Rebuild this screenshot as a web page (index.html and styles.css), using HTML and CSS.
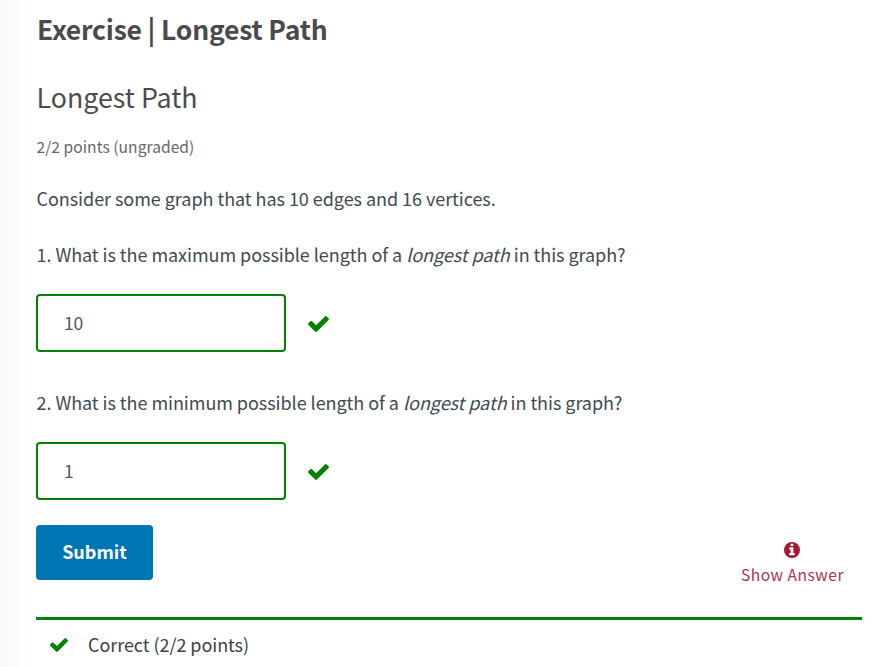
FILE: index.html
```html
<!DOCTYPE html>
<html lang="en">
<head>
<meta charset="utf-8">
<title>Exercise | Longest Path</title>
<link rel="stylesheet" href="styles.css">
</head>
<body>
<svg class="defs" width="0" height="0" aria-hidden="true">
  <symbol id="check" viewBox="121 334 1550 1188"><path d="M1671 566q0 40-28 68l-724 724-136 136q-28 28-68 28t-68-28l-136-136-362-362q-28-28-28-68t28-68l136-136q28-28 68-28t68 28l294 295 656-657q28-28 68-28t68 28l136 136q28 28 28 68z"/></symbol>
</svg>
<main class="unit">
  <h1 class="unit-title"><span>Exercise | Longest Path</span></h1>
  <h2 class="problem-title"><span>Longest Path</span></h2>
  <div class="progress"><span>2/2 points (ungraded)</span></div>
  <p class="text intro"><span>Consider some graph that has 10 edges and 16 vertices.</span></p>
  <p class="text"><span>1. What is the maximum possible length of a <em>longest path</em> in this graph?</span></p>
  <div class="answer">
    <input class="field" type="text" value="10" aria-label="Answer 1">
    <svg class="check"><use href="#check"/></svg>
  </div>
  <p class="text second"><span>2. What is the minimum possible length of a <em>longest path</em> in this graph?</span></p>
  <div class="answer">
    <input class="field" type="text" value="1" aria-label="Answer 2">
    <svg class="check"><use href="#check"/></svg>
  </div>
  <div class="actions">
    <button class="submit" type="button">Submit</button>
    <button class="show" type="button">
      <svg class="info" viewBox="0 0 1536 1536"><path fill-rule="evenodd" d="M768 0a768 768 0 1 1 0 1536a768 768 0 1 1 0-1536zM1024 1248v-160q0-14-9-23t-23-9h-96V544q0-14-9-23t-23-9H544q-14 0-23 9t-9 23v160q0 14 9 23t23 9h96v320h-96q-14 0-23 9t-9 23v160q0 14 9 23t23 9h448q14 0 23-9t9-23zM896 352V192q0-14-9-23t-23-9H672q-14 0-23 9t-9 23v160q0 14 9 23t23 9h192q14 0 23-9t9-23z"/></svg>
      <span>Show Answer</span>
    </button>
  </div>
  <div class="notification">
    <svg class="check small"><use href="#check"/></svg>
    <span>Correct (2/2 points)</span>
  </div>
</main>
</body>
</html>
```

FILE: styles.css
```css
* { box-sizing: border-box; }
body {
  margin: 0;
  height: 667px;
  overflow: hidden;
  background: linear-gradient(to right, #f8f8f8 0, #fcfcfc 14px, #fefefe 30px, #fff 36px);
  font-family: "Noto Sans CJK SC", "Open Sans", sans-serif;
  color: #414141;
}
.defs { display: block; }
.unit { padding: 11px 18px 0 36px; }
h1, h2, p { margin: 0; }
.unit-title { padding-left: 1px; font-size: 26.5px; line-height: 36px; font-weight: 600; letter-spacing: -.2px; color: #4a4a4a; }
.problem-title { margin-top: 32px; padding-left: .5px; font-size: 26.8px; line-height: 36px; font-weight: 400; color: #4c4c4c; }
.progress { margin-top: 19px; padding-left: .5px; font-size: 15.6px; line-height: 24px; color: #666; letter-spacing: .04px; }
.text { padding-left: .5px; font-size: 18px; line-height: 28px; letter-spacing: -.045px; color: #414a51; white-space: nowrap; }
.intro { margin: 26px 0 28px; }
.answer { display: flex; align-items: center; gap: 22px; margin-top: 26px; }
.field {
  width: 250px;
  height: 58px;
  padding: 0 26px 2px;
  border: 2px solid #008100;
  border-radius: 4px;
  background: #fff;
  font: 17.5px "Noto Sans CJK SC", "Open Sans", sans-serif;
  letter-spacing: -.2px;
  color: #555;
}
.check { width: 21px; height: 16px; margin-top: 1px; fill: #008100; }
.second { margin-top: 36px; }
.actions { display: flex; justify-content: space-between; margin-top: 25px; padding-right: 18px; }
button { font-family: inherit; border: 0; padding: 0; }
.submit {
  width: 117px;
  height: 55px;
  padding-bottom: 3px;
  border-radius: 4px;
  background: #0075b4;
  color: #fff;
  font-size: 18px;
  font-weight: 600;
}
.show {
  display: flex;
  flex-direction: column;
  align-items: center;
  padding-top: 17px;
  background: none;
  color: #ab354a;
  font-size: 15.6px;
  line-height: 24px;
  letter-spacing: .5px;
}
.info { width: 16px; height: 16px; fill: #a31932; margin-bottom: 4px; }
.notification {
  display: flex;
  align-items: center;
  gap: 20px;
  margin-top: 31px;
  height: 51px;
  padding-left: 14px;
  border-top: 3px solid #008100;
  font-size: 18px;
  line-height: 28px;
  letter-spacing: -.06px;
}
.small { width: 18px; height: 14px; }
```
